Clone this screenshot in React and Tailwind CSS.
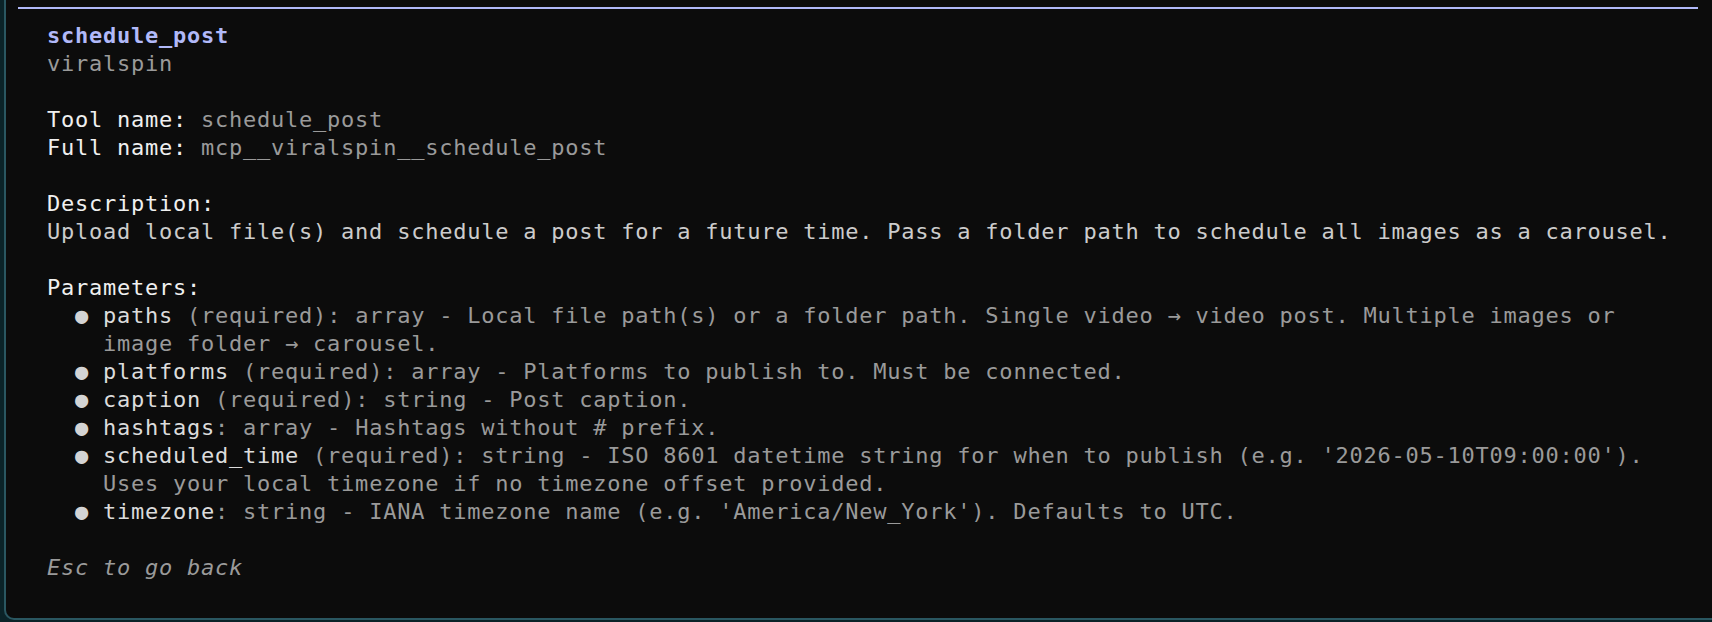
import React from "react"

const params = [
  {
    name: "paths",
    req: true,
    lines: [
      "array - Local file path(s) or a folder path. Single video → video post. Multiple images or",
      "image folder → carousel.",
    ],
  },
  { name: "platforms", req: true, lines: ["array - Platforms to publish to. Must be connected."] },
  { name: "caption", req: true, lines: ["string - Post caption."] },
  { name: "hashtags", req: false, lines: ["array - Hashtags without # prefix."] },
  {
    name: "scheduled_time",
    req: true,
    lines: [
      "string - ISO 8601 datetime string for when to publish (e.g. '2026-05-10T09:00:00').",
      "Uses your local timezone if no timezone offset provided.",
    ],
  },
  { name: "timezone", req: false, lines: ["string - IANA timezone name (e.g. 'America/New_York'). Defaults to UTC."] },
]

function Row({ children, className = "" }) {
  return <div className={`h-[28px] whitespace-pre ${className}`}>{children}</div>
}

function Blank() {
  return <div className="h-[28px]" />
}

export default function App() {
  return (
    <div className="w-[1712px] h-[622px] bg-[#0b2328] overflow-hidden">
      <div className="ml-[4px] h-[620px] bg-[#0c0c0c] border-l-2 border-b-2 border-[#2a5761] rounded-bl-[10px]">
        {/* top rule */}
        <div className="pt-[7px] pl-[12px]">
          <div className="w-[1680px] h-[2px] bg-[#b1b9f9]" />
        </div>

        <div
          className="mt-[13px] pl-[41px] text-[22px] leading-[28px] tracking-[0.76px] text-[#9a9a9a]"
          style={{ fontFamily: '"DejaVu Sans Mono", "Liberation Mono", monospace' }}
        >
          <Row className="font-bold text-[#b1b9f9]">schedule_post</Row>
          <Row>viralspin</Row>
          <Blank />
          <Row>
            <span className="text-[#f0f0f0]">Tool name: </span>schedule_post
          </Row>
          <Row>
            <span className="text-[#f0f0f0]">Full name: </span>mcp__viralspin__schedule_post
          </Row>
          <Blank />
          <Row className="text-[#f0f0f0]">Description:</Row>
          <Row className="text-[#cccccc]">
            Upload local file(s) and schedule a post for a future time. Pass a folder path to schedule all images as a carousel.
          </Row>
          <Blank />
          <Row className="text-[#f0f0f0]">Parameters:</Row>
          {params.map((p) => (
            <div key={p.name}>
              {p.lines.map((line, i) => (
                <Row key={i}>
                  {i === 0 ? (
                    <>
                      <span className="text-[#d4d4d4]">{"  ● "}</span>
                      <span className="text-[#dcdcdc]">{p.name}</span>
                      {p.req ? " (required)" : ""}
                      {": "}
                      {line}
                    </>
                  ) : (
                    <>{"    "}{line}</>
                  )}
                </Row>
              ))}
            </div>
          ))}
          <Blank />
          <Row className="italic">Esc to go back</Row>
        </div>
      </div>
    </div>
  )
}
